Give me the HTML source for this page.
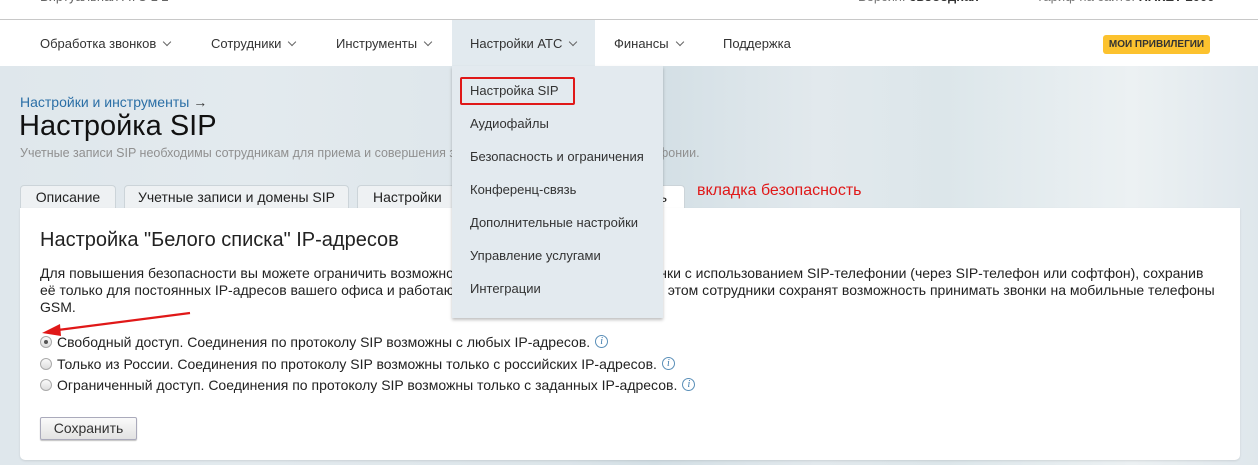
<!DOCTYPE html>
<html><head><meta charset="utf-8"><style>
*{margin:0;padding:0;box-sizing:border-box}
body{width:1258px;height:465px;overflow:hidden;font-family:"Liberation Sans",sans-serif;color:#222;position:relative;
background:linear-gradient(90deg,#dfe7ec 0%,#e3eaee 20%,#dce5ea 45%,#d3dfe5 52%,#e2e9ed 65%,#dce6ea 75%,#ecf1f3 90%,#dfe7ec 100%)}
.a{position:absolute;white-space:nowrap}
#top{position:absolute;left:0;top:0;width:1258px;height:66px;background:#fff}
#top .line{position:absolute;left:0;top:19px;width:1258px;height:1px;background:#c8c8c8}
.nav{position:absolute;top:36px;font-size:13px;color:#333}
.chev{display:inline-block;width:6px;height:6px;border-right:1.3px solid #666;border-bottom:1.3px solid #666;transform:rotate(45deg);margin-left:8px;position:relative;top:-3px}
#act{position:absolute;left:452px;top:20px;width:143px;height:46px;background:#e2eaef}
#priv{position:absolute;left:1103px;top:35px;width:107px;height:19px;background:#fcc22e;border-radius:3px;font-size:10px;font-weight:bold;color:#333;text-align:center;line-height:19px}
#dd{position:absolute;left:452px;top:66px;width:211px;height:252px;background:#e3eaef;box-shadow:0 2px 3px rgba(0,0,0,.25);z-index:5}
#dd div{position:absolute;left:18px;font-size:13px;color:#333}
#red{position:absolute;left:460px;top:77px;width:115px;height:28px;border:2px solid #e01818;border-radius:2px;z-index:6}
.tab{position:absolute;top:185px;height:24px;background:#eef1f3;border:1px solid #ccd4d9;border-bottom:none;border-radius:4px 4px 0 0;font-size:14px;line-height:22px;text-align:center;color:#222}
#panel{position:absolute;left:20px;top:208px;width:1220px;height:252px;background:#fff;border-radius:0 0 5px 5px;box-shadow:0 1px 2px rgba(0,0,0,.1)}
.p{font-size:14px;color:#222}
.rad{position:absolute;width:12px;height:12px;border-radius:50%;border:1px solid #aaa;background:linear-gradient(#fafafa,#ddd)}
.info{display:inline-block;width:13px;height:13px;border:1px solid #5a8fb8;border-radius:50%;font:italic 10px "Liberation Serif",serif;color:#3a78aa;text-align:center;line-height:12px;margin-left:5px;position:relative;top:1px;vertical-align:top}
</style></head><body>
<div id="top"><div class="line"></div>
<div class="a" style="left:40px;top:-11px;font-size:13px;color:#666">Виртуальная АТС 1 2</div>
<div class="a" style="left:858px;top:-11px;font-size:13px;color:#777">Версия: <b style="color:#333">свободная</b></div>
<div class="a" style="left:1036px;top:-11px;font-size:13px;color:#777">Тариф на сайте: <b style="color:#333">ПАКЕТ 2000</b></div>
</div>
<div id="act"></div>
<div class="a nav" style="left:40px">Обработка звонков<span class="chev"></span></div>
<div class="a nav" style="left:211px">Сотрудники<span class="chev"></span></div>
<div class="a nav" style="left:336px">Инструменты<span class="chev"></span></div>
<div class="a nav" style="left:470px">Настройки АТС<span class="chev"></span></div>
<div class="a nav" style="left:614px">Финансы<span class="chev"></span></div>
<div class="a nav" style="left:723px">Поддержка</div>
<div id="priv">МОИ ПРИВИЛЕГИИ</div>

<div class="a" style="left:20px;top:94px;font-size:14px;color:#2b6fa6">Настройки и инструменты<span style="color:#333"> →</span></div>
<div class="a" style="left:19px;top:110px;font-size:29px;color:#111">Настройка SIP</div>
<div class="a" style="left:20px;top:146px;font-size:12.5px;color:#909090">Учетные записи SIP необходимы сотрудникам для приема и совершения звонков с использованием SIP-телефонии.</div>

<div class="tab" style="left:20px;width:96px">Описание</div>
<div class="tab" style="left:124px;width:225px">Учетные записи и домены SIP</div>
<div class="tab" style="left:357px;width:110px;text-align:left;padding-left:15px">Настройки SIP</div>
<div class="tab" style="left:560px;width:125px;background:#fff;text-align:right;padding-right:17px">Безопасность</div>
<div class="a" style="left:697px;top:182px;font-size:16px;color:#e01818">вкладка безопасность</div>

<div id="panel"></div>
<div class="a" style="left:40px;top:229px;font-size:20px;color:#222">Настройка "Белого списка" IP-адресов</div>
<div class="a p" style="left:40px;top:265px">Для повышения безопасности вы можете ограничить возможность совершать и принимать звонки с использованием SIP-телефонии (через SIP-телефон или софтфон), сохранив</div>
<div class="a p" style="left:40px;top:282px">её только для постоянных IP-адресов вашего офиса и работающих удаленно сотрудников. При этом сотрудники сохранят возможность принимать звонки на мобильные телефоны</div>
<div class="a p" style="left:40px;top:299px">GSM.</div>

<div class="rad" style="left:40px;top:336px"><div style="position:absolute;left:3px;top:3px;width:4px;height:4px;border-radius:50%;background:#555"></div></div>
<div class="a p" style="left:57px;top:334px">Свободный доступ. Соединения по протоколу SIP возможны с любых IP-адресов.<span class="info">i</span></div>
<div class="rad" style="left:40px;top:358px"></div>
<div class="a p" style="left:57px;top:356px">Только из России. Соединения по протоколу SIP возможны только с российских IP-адресов.<span class="info">i</span></div>
<div class="rad" style="left:40px;top:379px"></div>
<div class="a p" style="left:57px;top:377px">Ограниченный доступ. Соединения по протоколу SIP возможны только с заданных IP-адресов.<span class="info">i</span></div>

<div class="a" style="left:40px;top:417px;width:97px;height:23px;border:1px solid #aab;border-radius:2px;background:linear-gradient(#fafafa,#e2e2e2);box-shadow:0 1px 1px rgba(0,0,0,.25);font-size:14px;line-height:21px;text-align:center;color:#333">Сохранить</div>

<svg class="a" style="left:0;top:0;z-index:7" width="1258" height="465"><line x1="190" y1="313" x2="58" y2="330" stroke="#e01818" stroke-width="2.2"/><polygon points="42,333 60,324 61,336" fill="#e01818"/></svg>

<div id="dd">
<div style="top:17px">Настройка SIP</div>
<div style="top:50px">Аудиофайлы</div>
<div style="top:83px">Безопасность и ограничения</div>
<div style="top:116px">Конференц-связь</div>
<div style="top:149px">Дополнительные настройки</div>
<div style="top:182px">Управление услугами</div>
<div style="top:215px">Интеграции</div>
</div>
<div id="red"></div>
</body></html>
